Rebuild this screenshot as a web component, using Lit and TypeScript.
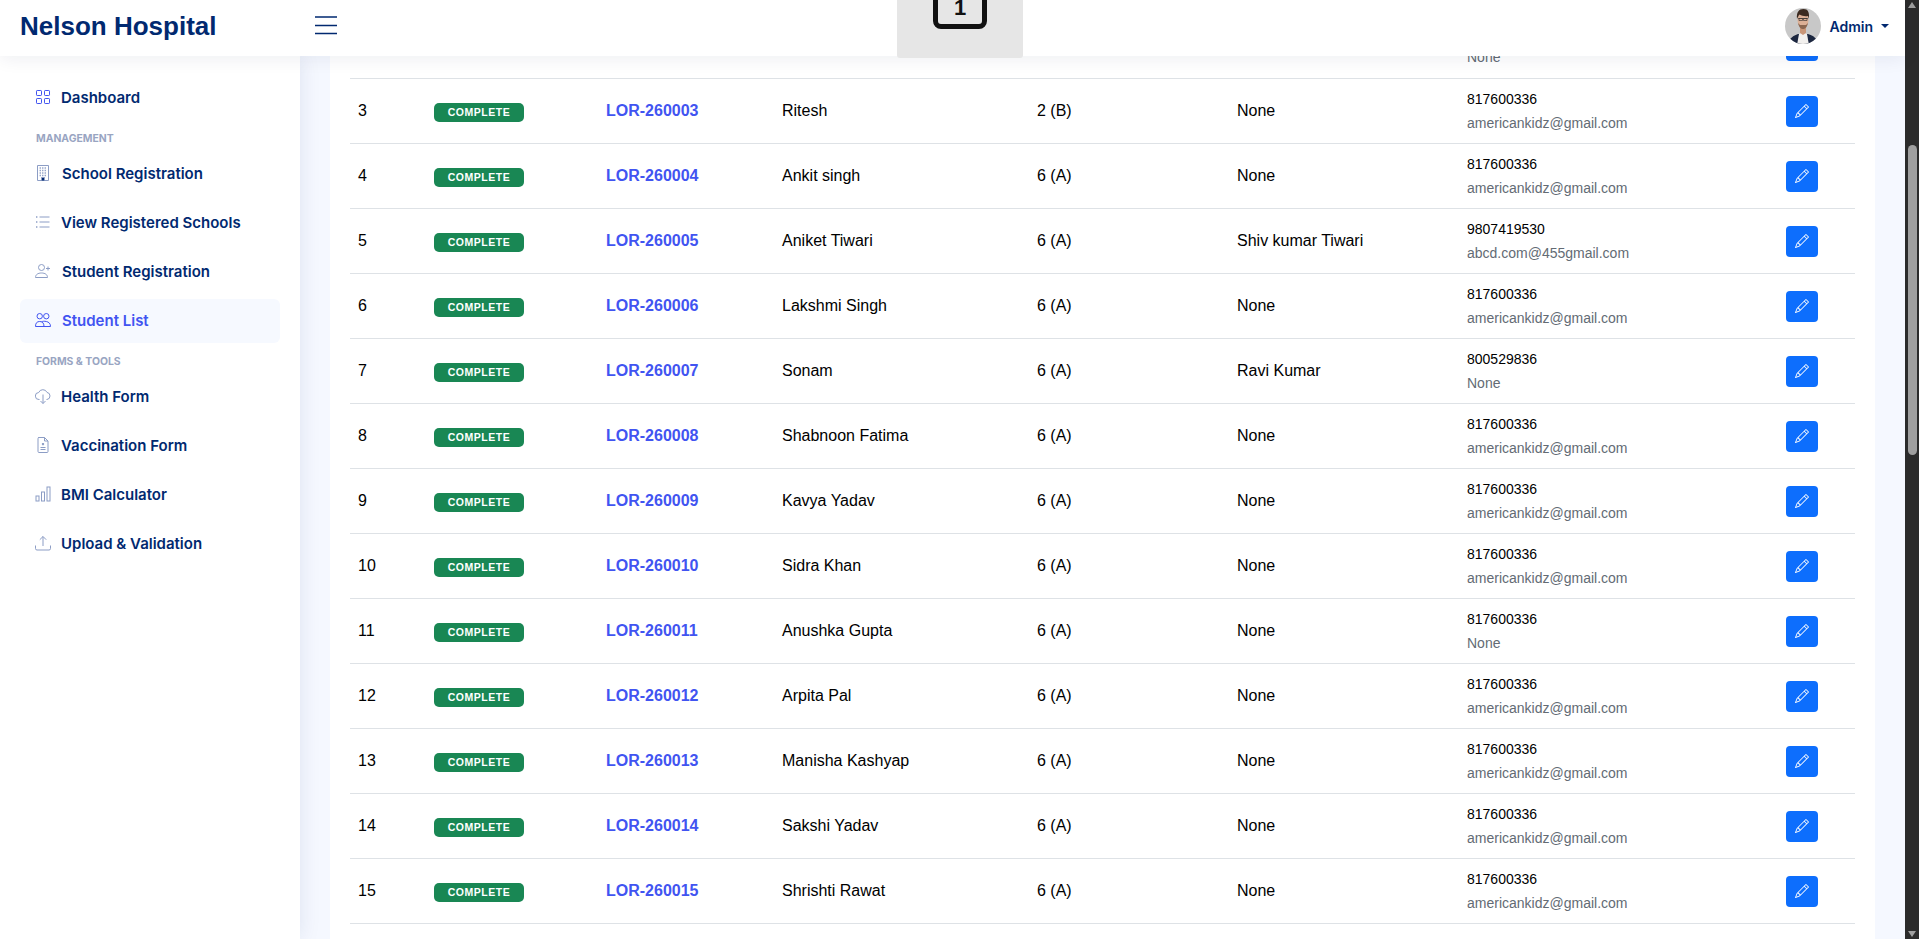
import { LitElement, html, css, svg } from "lit";
import { customElement } from "lit/decorators.js";

interface Row {
  no: number;
  name: string;
  cls: string;
  parent: string;
  phone: string;
  email: string;
}

const mail = "americankidz@gmail.com";

const rows: Row[] = [
  { no: 3, name: "Ritesh", cls: "2 (B)", parent: "None", phone: "817600336", email: mail },
  { no: 4, name: "Ankit singh", cls: "6 (A)", parent: "None", phone: "817600336", email: mail },
  { no: 5, name: "Aniket Tiwari", cls: "6 (A)", parent: "Shiv kumar Tiwari", phone: "9807419530", email: "abcd.com@455gmail.com" },
  { no: 6, name: "Lakshmi Singh", cls: "6 (A)", parent: "None", phone: "817600336", email: mail },
  { no: 7, name: "Sonam", cls: "6 (A)", parent: "Ravi Kumar", phone: "800529836", email: "None" },
  { no: 8, name: "Shabnoon Fatima", cls: "6 (A)", parent: "None", phone: "817600336", email: mail },
  { no: 9, name: "Kavya Yadav", cls: "6 (A)", parent: "None", phone: "817600336", email: mail },
  { no: 10, name: "Sidra Khan", cls: "6 (A)", parent: "None", phone: "817600336", email: mail },
  { no: 11, name: "Anushka Gupta", cls: "6 (A)", parent: "None", phone: "817600336", email: "None" },
  { no: 12, name: "Arpita Pal", cls: "6 (A)", parent: "None", phone: "817600336", email: mail },
  { no: 13, name: "Manisha Kashyap", cls: "6 (A)", parent: "None", phone: "817600336", email: mail },
  { no: 14, name: "Sakshi Yadav", cls: "6 (A)", parent: "None", phone: "817600336", email: mail },
  { no: 15, name: "Shrishti Rawat", cls: "6 (A)", parent: "None", phone: "817600336", email: mail },
];

const icons = {
  grid: svg`<rect x="1.500" y="1.500" width="5" height="5" rx=".7"/><rect x="9.500" y="1.500" width="5" height="5" rx=".7"/><rect x="1.500" y="9.500" width="5" height="5" rx=".7"/><rect x="9.500" y="9.500" width="5" height="5" rx=".7"/>`,
  building: svg`<path d="M2.500.5h11v15h-11z"/><path d="M6.500 15.500v-3h3v3" fill="currentColor"/><path stroke-width="1.300" stroke-dasharray="1.300 1.200" d="M4.600 3h7M4.600 5.500h7M4.600 8h7M4.600 10.500h7"/>`,
  list: svg`<path d="M4.500 3h10M4.500 8h10M4.500 13h10"/><path stroke-width="1.400" d="M1 3h1.400M1 8h1.400M1 13h1.400"/>`,
  personAdd: svg`<circle cx="6.500" cy="4.500" r="3"/><path d="M.5 14.500c0-3 2.500-4.500 6-4.500s6 1.500 6 4.500z"/><path d="M13 3.500v4M11 5.500h4"/>`,
  people: svg`<circle cx="4.700" cy="4.200" r="2.700"/><circle cx="11.300" cy="4.200" r="2.700"/><path d="M.5 14.500c0-3.500 1.500-5 4.200-5s4.300 1.500 4.300 5z"/><path d="M6.500 9.800c1-.5 2.800-.8 4.800-.3 2.500.5 4.200 2 4.200 5H9"/>`,
  cloud: svg`<path d="M4.500 11.500H4a3.500 3.500 0 0 1-.3-7A4.500 4.500 0 0 1 12 4.400a3.600 3.600 0 0 1 0 7.100h-.5"/><path d="M8 6.500v9M5.500 13 8 15.500 10.500 13"/>`,
  doc: svg`<path d="M3.500.5h6l3.500 3.500v10.500a1 1 0 0 1-1 1h-8a1 1 0 0 1-1-1v-13a1 1 0 0 1 1-1z"/><path d="M9.500.5v3.500H13"/><path d="M5.500 10.500h5M5.500 12.500h5"/><path stroke-width="1.500" d="M8 6v2.200M6.900 7.100h2.200"/>`,
  bars: svg`<rect x="1" y="10" width="3" height="5"/><rect x="6.500" y="6" width="3" height="9"/><rect x="12" y="1" width="3" height="14"/>`,
  upload: svg`<path d="M.5 10.500v3a1.500 1.500 0 0 0 1.500 1.500h12a1.500 1.500 0 0 0 1.500-1.500v-3"/><path d="M8 11V1.500M4.800 4.700 8 1.500l3.200 3.200"/>`,
};

const pencil = svg`<path d="M12.146.146a.5.5 0 0 1 .708 0l3 3a.5.5 0 0 1 0 .708l-10 10a.5.5 0 0 1-.168.11l-5 2a.5.5 0 0 1-.65-.65l2-5a.5.5 0 0 1 .11-.168zM11.207 2.5 13.500 4.793 14.793 3.5 12.500 1.207zm1.586 3L10.500 3.207 4 9.707V10h.5a.5.5 0 0 1 .5.5v.5h.5a.5.5 0 0 1 .5.5v.5h.293zm-9.761 5.175-.106.106-1.528 3.821 3.821-1.528.106-.106A.5.5 0 0 1 5 12.500V12h-.5a.5.5 0 0 1-.5-.5V11h-.5a.5.5 0 0 1-.468-.325"/>`;

type IconName = keyof typeof icons;
interface NavItem {
  label: string;
  icon: IconName;
  active?: boolean;
  wide?: boolean;
}

const topItem: NavItem = { label: "Dashboard", icon: "grid" };
const management: NavItem[] = [
  { label: "School Registration", icon: "building", wide: true },
  { label: "View Registered Schools", icon: "list" },
  { label: "Student Registration", icon: "personAdd", wide: true },
  { label: "Student List", icon: "people", active: true, wide: true },
];
const tools: NavItem[] = [
  { label: "Health Form", icon: "cloud" },
  { label: "Vaccination Form", icon: "doc" },
  { label: "BMI Calculator", icon: "bars" },
  { label: "Upload & Validation", icon: "upload" },
];

@customElement("app-root")
export class AppRoot extends LitElement {
  static styles = css`
    :host {
      display: flex;
      height: 100vh;
      overflow: hidden;
      font-family: "Liberation Sans", Arial, sans-serif;
      color: #000;
    }
    .page {
      flex: 1;
      min-width: 0;
      display: flex;
      flex-direction: column;
      background: #f5f8ff;
    }

    .scrollbar {
      flex: 0 0 14px;
      box-sizing: border-box;
      padding: 2px 2px 2px 3px;
      display: flex;
      flex-direction: column;
      background: #2b2b2b;
    }
    .arrow {
      width: 0;
      height: 0;
      border-left: 4.5px solid transparent;
      border-right: 4.5px solid transparent;
    }
    .arrow.up {
      border-bottom: 6px solid #9f9f9f;
    }
    .arrow.down {
      margin-top: auto;
      border-top: 6px solid #9f9f9f;
    }
    .thumb {
      margin-top: 137px;
      height: 310px;
      border-radius: 4.5px;
      background: #9f9f9f;
    }

    .topbar {
      position: relative;
      z-index: 10;
      flex: none;
      height: 56px;
      box-sizing: border-box;
      padding-bottom: 4px;
      display: flex;
      align-items: center;
      background: #fff;
      box-shadow: 0 3px 18px rgba(20, 30, 70, 0.07);
    }
    .brand {
      width: 315px;
      padding-left: 20px;
      box-sizing: border-box;
      font-size: 26px;
      font-weight: 700;
      color: #012970;
    }
    .burger {
      display: flex;
      color: #012970;
    }
    .key-tab {
      position: absolute;
      left: 897px;
      top: 0;
      width: 126px;
      height: 58px;
      display: flex;
      justify-content: center;
      background: #e6e6e6;
      border-radius: 0 0 3px 3px;
      overflow: hidden;
    }
    .key {
      margin-top: -21px;
      width: 54px;
      height: 50px;
      box-sizing: border-box;
      border: 5px solid #111;
      border-radius: 8px;
      display: flex;
      align-items: flex-end;
      justify-content: center;
      padding-bottom: 8px;
      font-size: 22px;
      font-weight: 700;
      line-height: 16px;
      color: #111;
    }
    .user {
      margin-left: auto;
      margin-right: 16px;
      display: flex;
      align-items: center;
      color: #012970;
      font-family: "Inter", sans-serif;
      font-size: 14px;
      font-weight: 600;
    }
    .avatar {
      width: 36px;
      height: 36px;
      border-radius: 50%;
      margin-right: 8px;
    }
    .caret {
      margin-left: 8px;
      width: 0;
      height: 0;
      border-left: 4px solid transparent;
      border-right: 4px solid transparent;
      border-top: 4px solid #012970;
    }

    .body {
      flex: 1;
      min-height: 0;
      display: flex;
    }
    .sidebar {
      position: relative;
      z-index: 1;
      flex: 0 0 300px;
      box-sizing: border-box;
      padding: 20px 20px 0;
      background: #fff;
      box-shadow: 0 0 20px rgba(1, 41, 112, 0.1);
      font-family: "Inter", sans-serif;
    }
    .nav-item {
      height: 44px;
      box-sizing: border-box;
      margin-bottom: 5px;
      padding: 0 0 2px 15px;
      display: flex;
      align-items: center;
      gap: 10px;
      border-radius: 6px;
      font-size: 15px;
      font-weight: 600;
      color: #012970;
    }
    .nav-item.wide {
      gap: 11px;
    }
    .nav-item svg {
      flex: none;
      width: 16px;
      height: 16px;
      fill: none;
      stroke: #8c9dc5;
      stroke-width: 1;
    }
    .nav-item.dash svg {
      stroke: #4154f1;
    }
    .nav-item.active {
      background: #f6f9ff;
      color: #4154f1;
    }
    .nav-item.active svg {
      stroke: #4154f1;
    }
    .section {
      font-size: 10.4px;
      font-weight: 700;
      line-height: 13px;
      color: #99a5c2;
      padding: 6.5px 0 7.5px 16px;
    }

    .main {
      flex: 1;
      min-width: 0;
      margin-top: -43px;
      padding: 0 30px;
      overflow: hidden;
    }
    .card {
      height: 100%;
      box-sizing: border-box;
      padding: 0 20px;
      background: #fff;
    }
    table {
      width: 100%;
      table-layout: fixed;
      border-collapse: collapse;
      font-size: 16px;
    }
    .c-no { width: 76px; }
    .c-status { width: 172px; }
    .c-id { width: 176px; }
    .c-name { width: 255px; }
    .c-class { width: 200px; }
    .c-parent { width: 230px; }
    .c-contact { width: 319px; }
    td {
      height: 65px;
      box-sizing: border-box;
      padding: 8px;
      vertical-align: middle;
      border-bottom: 1px solid #dee2e6;
    }
    .badge {
      display: block;
      width: 90px;
      height: 19px;
      margin-top: 3px;
      border-radius: 5px;
      text-align: center;
      font-size: 10.5px;
      font-weight: 700;
      line-height: 19px;
      letter-spacing: 0.55px;
      color: #fff;
    }
    .badge.ok { background: #198754; }
    .badge.bad { background: #dc3545; }
    .lor {
      font-weight: 700;
      color: #4154f1;
    }
    .phone {
      min-height: 24px;
      font-size: 14px;
      line-height: 24px;
    }
    .email {
      font-size: 14px;
      line-height: 24px;
      color: #636b74;
    }
    .edit {
      display: flex;
      align-items: center;
      justify-content: center;
      width: 32px;
      height: 31px;
      margin-top: 1px;
      padding: 0;
      border: 0;
      border-radius: 4px;
      background: #0d6efd;
    }
    .edit svg {
      width: 14px;
      height: 14px;
      fill: #fff;
    }
  `;

  renderNavItem(item: NavItem, cls = "") {
    return html`
      <div class="nav-item ${cls} ${item.active ? "active" : ""} ${item.wide ? "wide" : ""}">
        <svg viewBox="0 0 16 16">${icons[item.icon]}</svg>
        <span>${item.label}</span>
      </div>
    `;
  }

  renderEdit() {
    return html`<button class="edit"><svg viewBox="0 0 16 16">${pencil}</svg></button>`;
  }

  renderRow(r: Row) {
    const id = "LOR-26" + String(r.no).padStart(4, "0");
    return html`
      <tr>
        <td>${r.no}</td>
        <td><span class="badge ok">COMPLETE</span></td>
        <td class="lor">${id}</td>
        <td>${r.name}</td>
        <td>${r.cls}</td>
        <td>${r.parent}</td>
        <td>
          <div class="phone">${r.phone}</div>
          <div class="email">${r.email}</div>
        </td>
        <td>${this.renderEdit()}</td>
      </tr>
    `;
  }

  render() {
    return html`
      <div class="page">
        <header class="topbar">
          <div class="brand">Nelson Hospital</div>
          <div class="burger">
            <svg width="22" height="20" viewBox="0 0 22 20" fill="none" stroke="currentColor" stroke-width="1.700">
              <path d="M0 1h22M0 9.500h22M0 17.500h22" />
            </svg>
          </div>
          <div class="key-tab"><div class="key">1</div></div>
          <div class="user">
            <svg class="avatar" viewBox="0 0 36 36">
              <rect width="36" height="36" fill="#c8c8c8" />
              <path d="M3 37c1-7 5-9 10-11h10c6 2 9 4 10 11z" fill="#1c2740" />
              <path d="M12 37l2-11 4-2 4 2 2 11z" fill="#f2f0ee" />
              <path d="M15 17h6v8l-3 2-3-2z" fill="#c99678" />
              <ellipse cx="18" cy="12" rx="5.500" ry="8" fill="#dcb096" />
              <path d="M12 11c-.800-7 2-10 6.500-10s6 3 5.500 10l-1-3c-3 .500-6 0-8.500-1.500-1 1-1.500 2.500-2.500 4.500z" fill="#3b2a20" />
              <path d="M13 15c1 4.500 3 6 5 6s4-1.500 5-6l-2 2h-6z" fill="#8a6650" />
              <path d="M13 10.500h10M14 10.500h3.500v2h-3.500zM18.500 10.500h3.500v2h-3.500z" fill="none" stroke="#2a2a2a" stroke-width=".6" />
            </svg>
            <span>Admin</span>
            <span class="caret"></span>
          </div>
        </header>
        <div class="body">
          <aside class="sidebar">
            ${this.renderNavItem(topItem, "dash")}
            <div class="section">MANAGEMENT</div>
            ${management.map((m) => this.renderNavItem(m))}
            <div class="section">FORMS &amp; TOOLS</div>
            ${tools.map((t) => this.renderNavItem(t))}
          </aside>
          <main class="main">
            <section class="card">
              <table>
                <colgroup>
                  <col class="c-no" />
                  <col class="c-status" />
                  <col class="c-id" />
                  <col class="c-name" />
                  <col class="c-class" />
                  <col class="c-parent" />
                  <col class="c-contact" />
                  <col />
                </colgroup>
                <tbody>
                  <tr>
                    <td></td>
                    <td><span class="badge bad"></span></td>
                    <td></td>
                    <td></td>
                    <td></td>
                    <td></td>
                    <td>
                      <div class="phone"></div>
                      <div class="email">None</div>
                    </td>
                    <td>${this.renderEdit()}</td>
                  </tr>
                  ${rows.map((r) => this.renderRow(r))}
                </tbody>
              </table>
            </section>
          </main>
        </div>
      </div>
      <div class="scrollbar">
        <div class="arrow up"></div>
        <div class="thumb"></div>
        <div class="arrow down"></div>
      </div>
    `;
  }
}
